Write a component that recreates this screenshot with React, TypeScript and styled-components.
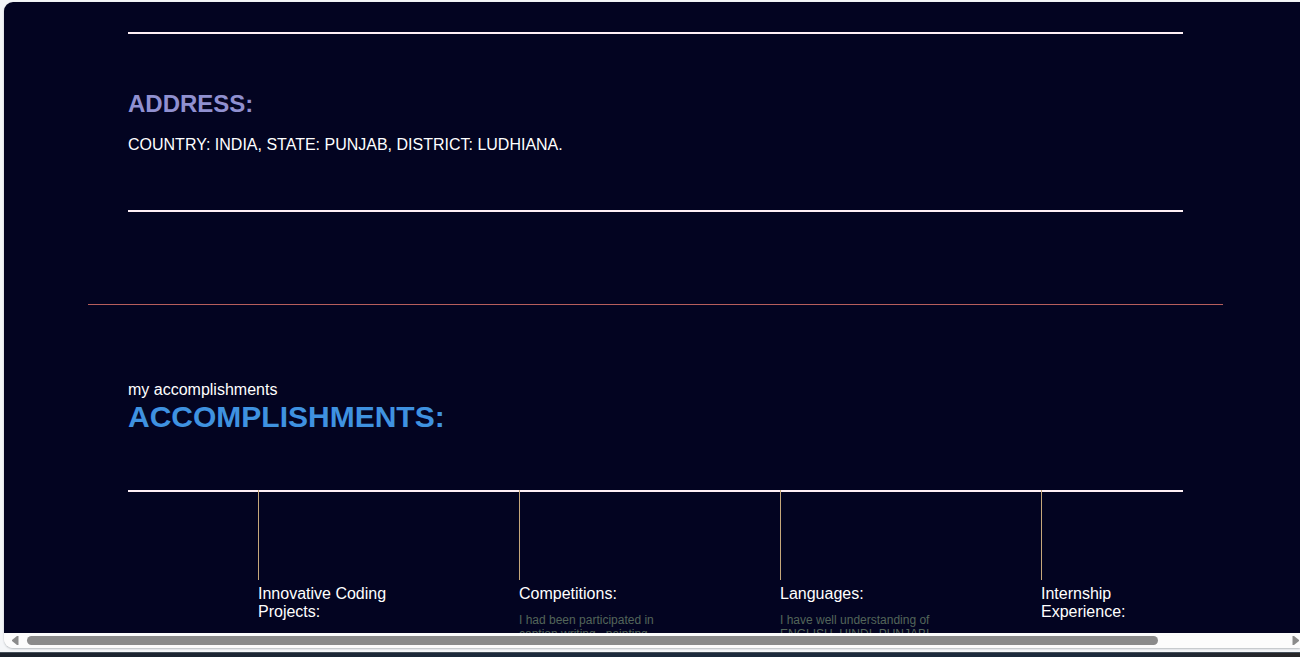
import React from "react";
import styled, { createGlobalStyle } from "styled-components";

const GlobalStyle = createGlobalStyle`
  * { box-sizing: border-box; }
  body {
    margin: 0;
    background: #f4f6f8;
    font-family: "Liberation Sans", Arial, sans-serif;
    font-size: 16px;
    line-height: 18px;
    overflow: hidden;
  }
  h1, h2, h3, p, ul { margin: 0; padding: 0; }
`;

const Shell = styled.div`
  display: flex;
  flex-direction: column;
  height: 100vh;
`;

const Frame = styled.div`
  flex: 1;
  min-height: 0;
  display: flex;
  flex-direction: column;
  margin: 2px 0 4px 4px;
  border-radius: 9px 0 0 9px;
  overflow: hidden;
  background: #fcfcfc;
  box-shadow: 0 1px 2px #b8bcc0;
`;

const Page = styled.main`
  flex: 1;
  min-height: 0;
  overflow: hidden;
  background: #030421;
  color: #ffffff;
  padding: 0 77px 0 84px;
`;

const Section = styled.section<{ $top: number; $bottom?: number }>`
  padding: ${(p) => p.$top}px 40px ${(p) => p.$bottom ?? 0}px;
`;

const Rule = styled.hr`
  height: 2px;
  margin: 0;
  border: 0;
  background: #fff0f5;
`;

const Divider = styled.hr`
  height: 1px;
  margin: 0;
  border: 0;
  background: #b65e5c;
`;

const Address = styled.div`
  padding: 56px 0;
`;

const AddressTitle = styled.h2`
  margin-bottom: 18px;
  color: #9090d0;
  font-size: 24px;
  line-height: 28px;
`;

const Title = styled.h1`
  margin-bottom: 56px;
  color: #3f92e0;
  font-size: 30px;
  line-height: 35px;
`;

const Timeline = styled.ul`
  display: grid;
  grid-template-columns: repeat(4, 1fr);
  column-gap: 106px;
  margin: -2px -13px 0 130px;
  list-style: none;
`;

const Item = styled.li`
  &::before {
    content: "";
    display: block;
    width: 1px;
    height: 90px;
    margin-bottom: 5px;
    background: #c5a77b;
  }
`;

const ItemTitle = styled.h3`
  font-size: 16px;
  font-weight: 400;
`;

const ItemText = styled.p`
  margin-top: 10px;
  color: #53655a;
  font-size: 12px;
  line-height: 14px;
`;

const ScrollBar = styled.div`
  flex: none;
  display: flex;
  align-items: center;
  height: 15px;
  padding-left: 7px;
  background: #fcfcfc;
`;

const Arrow = styled.button`
  display: flex;
  padding: 0;
  border: 0;
  background: none;
  color: #8b8b8b;
`;

const Thumb = styled.div`
  flex: 1;
  height: 9px;
  margin: 0 134px 0 8px;
  border-radius: 5px;
  background: #8b8b8b;
`;

const Taskbar = styled.footer`
  flex: none;
  height: 5px;
  border-top: 1px solid #46505a;
  background: linear-gradient(90deg, #1c222c, #1c2a3c 40%, #1c2a3c 85%, #272526);
`;

const items = [
  { title: "Innovative Coding Projects:" },
  {
    title: "Competitions:",
    text: "I had been participated in caption writing , painting",
  },
  {
    title: "Languages:",
    text: "I have well understanding of ENGLISH, HINDI, PUNJABI",
  },
  { title: "Internship Experience:" },
];

export default function App() {
  return (
    <>
      <GlobalStyle />
      <Shell>
        <Frame>
          <Page>
            <Section $top={30} $bottom={92}>
              <Rule />
              <Address>
                <AddressTitle>ADDRESS:</AddressTitle>
                <p>COUNTRY: INDIA, STATE: PUNJAB, DISTRICT: LUDHIANA.</p>
              </Address>
              <Rule />
            </Section>
            <Divider />
            <Section $top={76}>
              <p>my accomplishments</p>
              <Title>ACCOMPLISHMENTS:</Title>
              <Rule />
              <Timeline>
                {items.map((item) => (
                  <Item key={item.title}>
                    <ItemTitle>{item.title}</ItemTitle>
                    {item.text && <ItemText>{item.text}</ItemText>}
                  </Item>
                ))}
              </Timeline>
            </Section>
          </Page>
          <ScrollBar>
            <Arrow type="button" aria-label="Scroll left">
              <svg width="8" height="9" viewBox="0 0 8 9">
                <path d="M7.500 0H6L1 4V5L6 9H7.500Z" fill="currentColor" />
              </svg>
            </Arrow>
            <Thumb />
            <Arrow type="button" aria-label="Scroll right">
              <svg width="8" height="9" viewBox="0 0 8 9">
                <path d="M0.500 0H2L7 4V5L2 9H0.500Z" fill="currentColor" />
              </svg>
            </Arrow>
          </ScrollBar>
        </Frame>
        <Taskbar />
      </Shell>
    </>
  );
}
